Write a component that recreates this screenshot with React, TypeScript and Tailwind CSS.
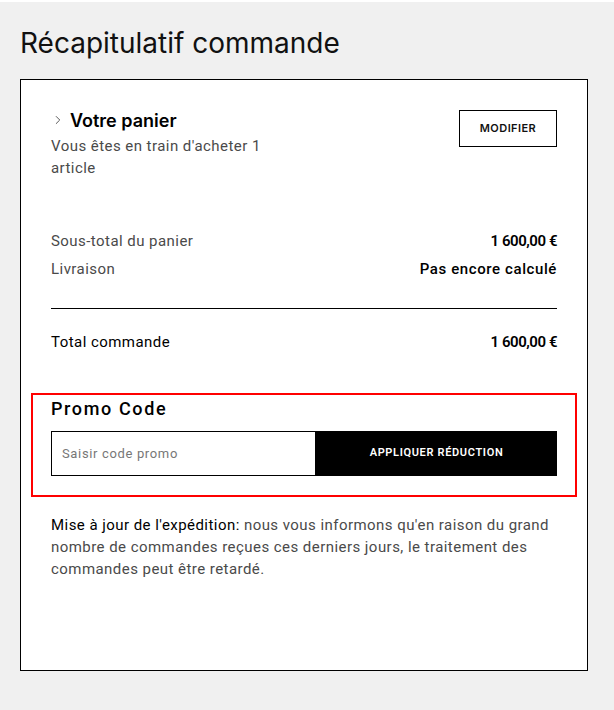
import { ChevronRight } from 'lucide-react'

function Row({ label, value, strong, tight }: { label: string; value: string; strong?: boolean; tight?: boolean }) {
  return (
    <div className="flex items-center justify-between h-[28px]">
      <span className={strong ? 'text-black' : 'text-[#4a4a4a]'}>{label}</span>
      <span className={tight ? 'font-semibold text-black tracking-[-0.03em]' : 'font-medium text-black tracking-[0.04em]'}>
        {value}
      </span>
    </div>
  )
}

export default function App() {
  return (
    <div className="bg-white pt-[2px] font-['Roboto',sans-serif] text-[15px] tracking-[0.03em]">
      <div className="bg-[#f0f0f0] h-[708px] px-[20px] pt-[24px]">
        <h1 className="font-['Inter',sans-serif] text-[28px] leading-[34px] tracking-normal text-[#111] mb-[19px]">
          Récapitulatif commande
        </h1>

        <div className="bg-white border border-black w-[568px] h-[592px] px-[30px] pt-[30px]">
          {/* Cart header */}
          <div className="flex items-start justify-between">
            <div className="w-[250px]">
              <div className="flex items-center h-[20px] gap-[5px]">
                <ChevronRight className="w-[14px] h-[14px] text-[#444]" strokeWidth={1.5} />
                <span className="font-['Inter',sans-serif] text-[18px] font-semibold tracking-normal text-black">
                  Votre panier
                </span>
              </div>
              <p className="mt-[5px] leading-[22px] text-[#4a4a4a]">
                Vous êtes en train d'acheter 1 article
              </p>
            </div>
            <button className="w-[98px] h-[37px] border border-black font-['Inter',sans-serif] text-[11px] font-semibold tracking-[0.04em] text-[#111]">
              MODIFIER
            </button>
          </div>

          {/* Totals */}
          <div className="mt-[48px]">
            <Row label="Sous-total du panier" value="1 600,00 €" tight />
            <Row label="Livraison" value="Pas encore calculé" />
          </div>
          <div className="mt-[25px] border-t border-black" />
          <div className="mt-[19px]">
            <Row label="Total commande" value="1 600,00 €" strong tight />
          </div>

          {/* Promo */}
          <div className="mt-[37px] -mx-[20px] border-2 border-[#ff0000] px-[18px] pt-[2px] pb-[19px]">
            <div className="text-[18px] leading-[24px] font-medium tracking-[0.09em] text-black">
              Promo Code
            </div>
            <div className="mt-[10px] flex h-[45px]">
              <input
                className="w-[265px] h-full border border-black px-[10px] text-[13px] tracking-[0.05em] text-black placeholder:text-[#777] outline-none"
                placeholder="Saisir code promo"
              />
              <button className="flex-1 h-full bg-black text-white text-[11px] font-semibold tracking-[0.06em]">
                APPLIQUER RÉDUCTION
              </button>
            </div>
          </div>

          {/* Shipping note */}
          <p className="mt-[17px] leading-[22px] text-[#4a4a4a]">
            <span className="text-black">Mise à jour de l'expédition:</span> nous vous informons qu'en raison du
            grand nombre de commandes reçues ces derniers jours, le traitement des commandes peut être retardé.
          </p>
        </div>
      </div>
    </div>
  )
}
